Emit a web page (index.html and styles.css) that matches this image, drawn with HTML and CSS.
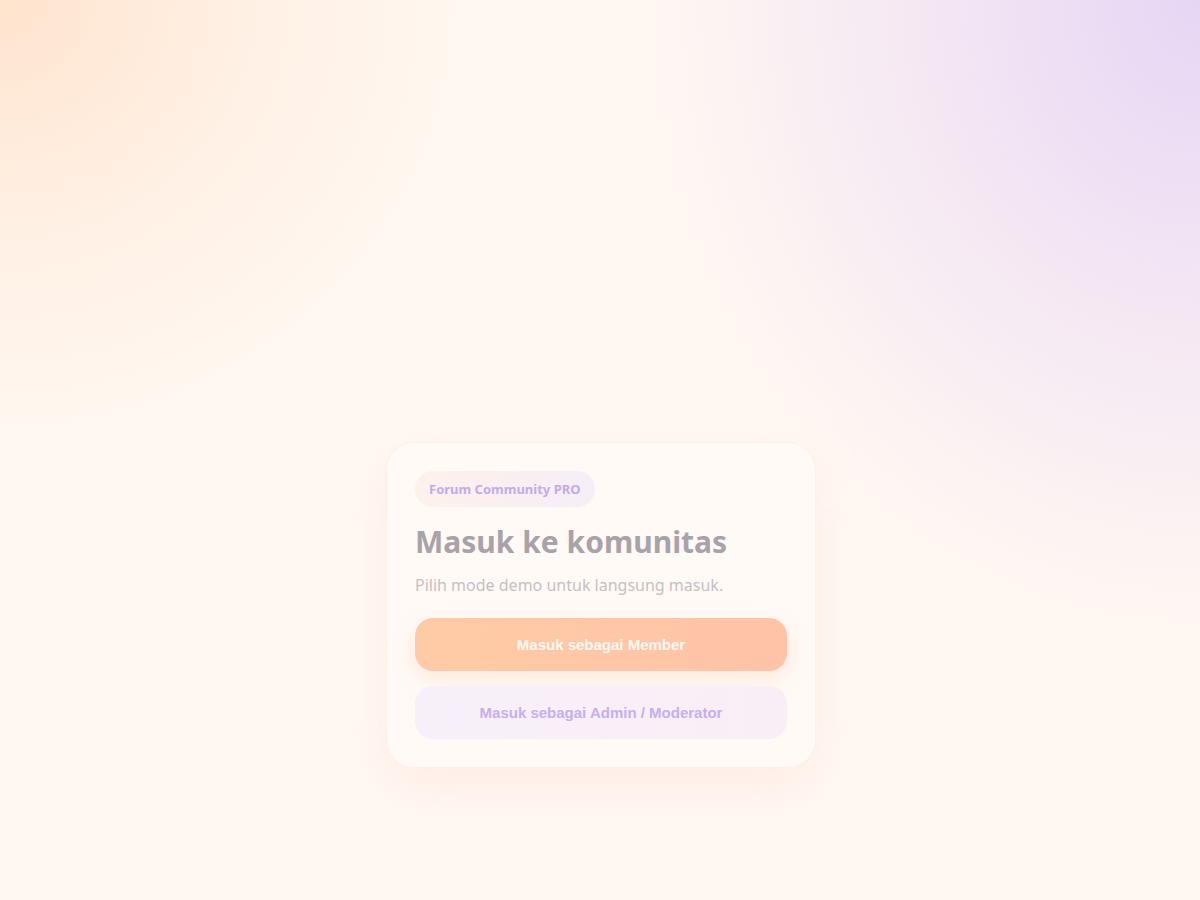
FILE: index.html
```html
<!DOCTYPE html>
<html lang="id">
<head>
<meta charset="utf-8">
<title>Masuk ke komunitas</title>
<link rel="stylesheet" href="styles.css">
</head>
<body>
<main class="page">
  <section class="card">
    <span class="badge">Forum Community PRO</span>
    <h1 class="title">Masuk ke komunitas</h1>
    <p class="subtitle">Pilih mode demo untuk langsung masuk.</p>
    <div class="actions">
      <button class="btn btn-primary">Masuk sebagai Member</button>
      <button class="btn btn-secondary">Masuk sebagai Admin / Moderator</button>
    </div>
  </section>
</main>
</body>
</html>
```
FILE: styles.css
```css
* { box-sizing: border-box; }
html, body { margin: 0; height: 100%; }
body {
  background:
    radial-gradient(ellipse 560px 640px at 100% 0%, rgba(230, 214, 245, 1) 0%, rgba(238, 222, 244, 0.7) 45%, rgba(255, 248, 242, 0) 100%),
    radial-gradient(ellipse 500px 470px at 0% 0%, rgba(255, 228, 206, 1) 0%, rgba(255, 234, 218, 0.55) 50%, rgba(255, 248, 242, 0) 100%),
    #fff8f2;
  font-family: "Noto Sans", "Open Sans", sans-serif;
}
.page {
  min-height: 100vh;
  padding: 310px 0 0 2px;
  display: grid;
  place-items: center;
}
.card {
  width: 430px;
  padding: 28px;
  background: #fffaf6;
  border: 1px solid rgba(255, 236, 228, 0.8);
  border-radius: 28px;
  box-shadow: 0 18px 50px rgba(250, 210, 200, 0.28);
  display: flex;
  flex-direction: column;
  align-items: flex-start;
}
.badge {
  display: inline-flex;
  align-items: center;
  height: 36px;
  padding: 0 14px;
  border-radius: 999px;
  background: linear-gradient(90deg, #fdf1ea, #f6eef8);
  color: #c3aaee;
  font-size: 13px;
  font-weight: 700;
}
.title {
  margin: 14px 0 0;
  font-size: 30px;
  line-height: 42px;
  font-weight: 700;
  color: #a9a2a9;
}
.subtitle {
  margin: 10px 0 0;
  font-size: 16px;
  line-height: 24px;
  color: #c6bfc3;
}
.actions {
  align-self: stretch;
  margin-top: 21px;
  display: flex;
  flex-direction: column;
  gap: 15px;
}
.btn {
  height: 53px;
  border: 0;
  border-radius: 18px;
  font-family: "Liberation Sans", Arial, sans-serif;
  font-size: 15px;
  font-weight: 700;
}
.btn-primary {
  background: linear-gradient(100deg, #ffcba5, #ffc3a9);
  color: #fff8f2;
  box-shadow: 0 8px 22px rgba(255, 200, 170, 0.35);
}
.btn-secondary {
  background: linear-gradient(100deg, #f7f0fa, #faeef6);
  color: #c6aef2;
}
```
